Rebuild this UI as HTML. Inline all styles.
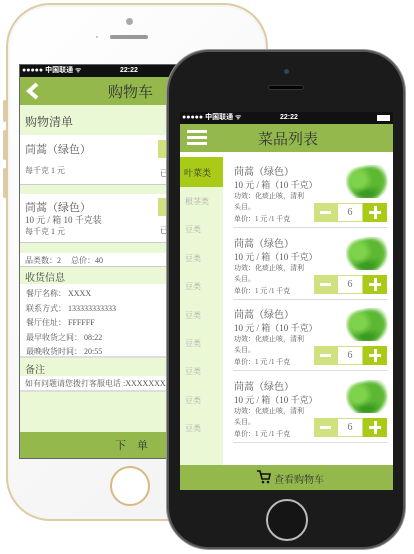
<!DOCTYPE html>
<html><head><meta charset="utf-8"><style>
*{margin:0;padding:0;box-sizing:border-box}
body{width:414px;height:554px;background:#fff;position:relative;overflow:hidden;font-family:"Liberation Serif","Noto Serif CJK SC",serif;color:#555}
.a{position:absolute}
.lt{position:absolute;white-space:nowrap}
.img{position:absolute;left:166px;top:8px;width:42px;height:33px;background:radial-gradient(circle at 30% 45%,#7fd24b 0 20%,transparent 40%),radial-gradient(circle at 65% 40%,#5cb833 0 22%,transparent 45%),radial-gradient(circle at 50% 70%,#3a9a22 0 25%,transparent 50%),radial-gradient(ellipse at 50% 55%,#6cc23e 0 55%,#fff 72%)}
</style></head><body>
<!-- white phone -->
<div class="a" style="left:6px;top:3px;width:262px;height:518px;border-radius:44px;background:linear-gradient(135deg,#fff,#f2f2f2);border:2px solid #dccba3;box-shadow:inset 0 0 0 2px #f5f5f5"></div>
<div class="a" style="left:3px;top:100px;width:4px;height:22px;background:#dccba3;border-radius:2px"></div>
<div class="a" style="left:3px;top:130px;width:4px;height:30px;background:#dccba3;border-radius:2px"></div>
<div class="a" style="left:3px;top:168px;width:4px;height:30px;background:#dccba3;border-radius:2px"></div>
<div class="a" style="left:126px;top:18px;width:7px;height:7px;border-radius:50%;background:#aaa"></div>
<div class="a" style="left:110px;top:35px;width:38px;height:4px;border-radius:2px;background:#999"></div>
<div class="a" style="left:96px;top:36px;width:2px;height:2px;border-radius:50%;background:#bbb"></div>
<div class="a" style="left:110px;top:466px;width:40px;height:40px;border-radius:50%;border:2px solid #d8b984;background:#fff"></div>
<!-- white phone screen -->
<div class="a" style="left:19px;top:64px;width:160px;height:395px;background:#ebf8d5;overflow:hidden;border:1px solid #666">
 <div class="a" style="left:0;top:0;width:160px;height:12px;background:#111;color:#fff;font:bold 7px 'Liberation Sans','Noto Sans CJK SC',sans-serif;line-height:12px;padding-left:2px">●●●●● 中国联通 ᯤ<span style="position:absolute;left:100px">22:22</span></div>
 <div class="a" style="left:0;top:12px;width:160px;height:28px;background:#94b84c"></div>
 <svg class="a" style="left:4px;top:17px" width="18" height="18" viewBox="0 0 18 18"><path d="M13 2 L5 9 L13 16" fill="none" stroke="#fff" stroke-width="4"/></svg>
 <div class="lt" style="left:88px;top:16px;font-size:15px;color:#333">购物车</div>
 <div class="lt" style="left:5px;top:48px;font-size:12px;color:#444">购物清单</div>
 <div class="a" style="left:0;top:70px;width:160px;height:50px;background:#fff;border-bottom:1px solid #ccc"></div>
 <div class="lt" style="left:5px;top:76px;font-size:11px">茼蒿（绿色）</div>
 <div class="lt" style="left:5px;top:100px;font-size:8px">每千克 1 元</div>
 <div class="a" style="left:138px;top:75px;width:22px;height:18px;background:#cfe27f"></div>
 <div class="lt" style="left:140px;top:103px;font-size:8px">已</div>
 <div class="a" style="left:0;top:129px;width:160px;height:49px;background:#fff;border-bottom:1px solid #ccc"></div>
 <div class="lt" style="left:5px;top:134px;font-size:11px">茼蒿（绿色）</div>
 <div class="lt" style="left:5px;top:148px;font-size:9px">10 元 / 箱 10 千克装</div>
 <div class="lt" style="left:5px;top:161px;font-size:8px">每千克 1 元</div>
 <div class="a" style="left:138px;top:133px;width:22px;height:18px;background:#cfe27f"></div>
 <div class="lt" style="left:140px;top:160px;font-size:8px">已</div>
 <div class="a" style="left:0;top:188px;width:160px;height:14px;background:#fff;border-bottom:1px solid #ccc"></div>
 <div class="lt" style="left:5px;top:190px;font-size:8px">品类数：2　 总价：40</div>
 <div class="lt" style="left:5px;top:204px;font-size:10px;color:#444">收货信息</div>
 <div class="a" style="left:0;top:219px;width:160px;height:74px;background:#fff;border-bottom:2px solid #ddd"></div>
 <div class="lt" style="left:6px;top:222px;font-size:8px;line-height:14.6px">餐厅名称：&nbsp;XXXX<br>联系方式：&nbsp;133333333333<br>餐厅住址：&nbsp;FFFFFF<br>最早收货之间：&nbsp;08:22<br>最晚收货时间：&nbsp;20:55</div>
 <div class="lt" style="left:5px;top:296px;font-size:10px;color:#444">备注</div>
 <div class="a" style="left:0;top:311px;width:160px;height:16px;background:#fff;border-bottom:2px solid #ddd"></div>
 <div class="lt" style="left:5px;top:313px;font-size:8px">如有问题请您拨打客服电话 :XXXXXXXXXX</div>
 <div class="a" style="left:0;top:367px;width:160px;height:28px;background:#94b84c"></div>
 <div class="lt" style="left:95px;top:372px;font-size:11px;color:#333">下　单</div>
</div>
<!-- black phone -->
<div class="a" style="left:167px;top:50px;width:238px;height:499px;border-radius:42px;background:#1b1b1b;border:2px solid #555;box-shadow:0 0 0 1px #999"></div>
<div class="a" style="left:284px;top:69px;width:5px;height:5px;border-radius:50%;background:#345"></div>
<div class="a" style="left:268px;top:85px;width:36px;height:5px;border-radius:3px;background:#050505;border:1px solid #333"></div>
<div class="a" style="left:266px;top:499px;width:42px;height:42px;border-radius:50%;border:2px solid #bbb;background:#151515"></div>
<!-- black phone screen -->
<div class="a" style="left:180px;top:112px;width:213px;height:378px;background:#fff;overflow:hidden">
 <div class="a" style="left:0;top:0;width:213px;height:12px;background:#111;color:#fff;font:bold 7px 'Liberation Sans','Noto Sans CJK SC',sans-serif;line-height:12px;padding-left:2px">●●●●● 中国联通 ᯤ<span style="position:absolute;left:100px">22:22</span><span style="position:absolute;right:3px;top:3px;width:13px;height:6px;background:#fff"></span></div>
 <div class="a" style="left:0;top:12px;width:213px;height:28px;background:#94b84c"></div>
 <div class="a" style="left:7px;top:18px;width:20px;height:3px;background:#fff"></div>
 <div class="a" style="left:7px;top:24px;width:20px;height:3px;background:#fff"></div>
 <div class="a" style="left:7px;top:30px;width:20px;height:3px;background:#fff"></div>
 <div class="lt" style="left:78px;top:16px;font-size:15px;color:#333">菜品列表</div>
 <div class="a" style="left:0;top:45px;width:43px;height:308px;background:#ebf8d5"></div>
 <div class="a" style="left:0;top:45px;width:43px;height:30px;background:#a9cb17"></div>
 <div class="lt" style="left:4px;top:54px;font-size:9px;color:#333">叶菜类</div>
 <div class="lt" style="left:5px;top:76px;font-size:8px;color:#aaa;line-height:28.4px">根茎类<br>豆类<br>豆类<br>豆类<br>豆类<br>豆类<br>豆类<br>豆类<br>豆类</div>
 <div class="a" style="left:0;top:353px;width:213px;height:25px;background:#94b84c"></div>
 <svg class="a" style="left:77px;top:358px" width="14" height="14" viewBox="0 0 14 14"><path d="M0 1 H3 L5 9 H12 L13 4 H4" fill="none" stroke="#111" stroke-width="1.6"/><circle cx="6" cy="12" r="1.3" fill="#111"/><circle cx="11" cy="12" r="1.3" fill="#111"/></svg>
 <div class="lt" style="left:94px;top:359px;font-size:10px;color:#333">查看购物车</div>
</div>
<div class="a" style="left:180px;top:157px;width:213px;height:72px">
  <div class="lt" style="left:54px;top:6px;font-size:10px">茼蒿（绿色）</div>
  <div class="lt" style="left:54px;top:21px;font-size:9px">10 元 / 箱（10 千克）</div>
  <div class="lt" style="left:54px;top:34px;font-size:7px">功效：化痰止咳，清利</div>
  <div class="lt" style="left:54px;top:45px;font-size:7px">头目。</div>
  <div class="lt" style="left:54px;top:57px;font-size:7px">单价：1 元 /1 千克</div>
  <div class="img"></div>
  <div class="a" style="left:134px;top:46px;width:23px;height:19px;background:#cfe27f"></div>
  <div class="a" style="left:140px;top:54px;width:11px;height:3px;background:#fff"></div>
  <div class="a" style="left:157px;top:46px;width:26px;height:19px;background:#fff;border:1px solid #cfe27f;text-align:center;font-size:10px;line-height:17px;color:#777">6</div>
  <div class="a" style="left:183px;top:46px;width:24px;height:19px;background:#a9cb17"></div>
  <div class="a" style="left:189px;top:54px;width:12px;height:3px;background:#fff"></div>
  <div class="a" style="left:194px;top:49px;width:3px;height:13px;background:#fff"></div>
  <div class="a" style="left:53px;top:70px;width:154px;height:1px;background:#ddd"></div>
</div>
<div class="a" style="left:180px;top:229px;width:213px;height:72px">
  <div class="lt" style="left:54px;top:6px;font-size:10px">茼蒿（绿色）</div>
  <div class="lt" style="left:54px;top:21px;font-size:9px">10 元 / 箱（10 千克）</div>
  <div class="lt" style="left:54px;top:34px;font-size:7px">功效：化痰止咳，清利</div>
  <div class="lt" style="left:54px;top:45px;font-size:7px">头目。</div>
  <div class="lt" style="left:54px;top:57px;font-size:7px">单价：1 元 /1 千克</div>
  <div class="img"></div>
  <div class="a" style="left:134px;top:46px;width:23px;height:19px;background:#cfe27f"></div>
  <div class="a" style="left:140px;top:54px;width:11px;height:3px;background:#fff"></div>
  <div class="a" style="left:157px;top:46px;width:26px;height:19px;background:#fff;border:1px solid #cfe27f;text-align:center;font-size:10px;line-height:17px;color:#777">6</div>
  <div class="a" style="left:183px;top:46px;width:24px;height:19px;background:#a9cb17"></div>
  <div class="a" style="left:189px;top:54px;width:12px;height:3px;background:#fff"></div>
  <div class="a" style="left:194px;top:49px;width:3px;height:13px;background:#fff"></div>
  <div class="a" style="left:53px;top:70px;width:154px;height:1px;background:#ddd"></div>
</div>
<div class="a" style="left:180px;top:300px;width:213px;height:72px">
  <div class="lt" style="left:54px;top:6px;font-size:10px">茼蒿（绿色）</div>
  <div class="lt" style="left:54px;top:21px;font-size:9px">10 元 / 箱（10 千克）</div>
  <div class="lt" style="left:54px;top:34px;font-size:7px">功效：化痰止咳，清利</div>
  <div class="lt" style="left:54px;top:45px;font-size:7px">头目。</div>
  <div class="lt" style="left:54px;top:57px;font-size:7px">单价：1 元 /1 千克</div>
  <div class="img"></div>
  <div class="a" style="left:134px;top:46px;width:23px;height:19px;background:#cfe27f"></div>
  <div class="a" style="left:140px;top:54px;width:11px;height:3px;background:#fff"></div>
  <div class="a" style="left:157px;top:46px;width:26px;height:19px;background:#fff;border:1px solid #cfe27f;text-align:center;font-size:10px;line-height:17px;color:#777">6</div>
  <div class="a" style="left:183px;top:46px;width:24px;height:19px;background:#a9cb17"></div>
  <div class="a" style="left:189px;top:54px;width:12px;height:3px;background:#fff"></div>
  <div class="a" style="left:194px;top:49px;width:3px;height:13px;background:#fff"></div>
  <div class="a" style="left:53px;top:70px;width:154px;height:1px;background:#ddd"></div>
</div>
<div class="a" style="left:180px;top:372px;width:213px;height:72px">
  <div class="lt" style="left:54px;top:6px;font-size:10px">茼蒿（绿色）</div>
  <div class="lt" style="left:54px;top:21px;font-size:9px">10 元 / 箱（10 千克）</div>
  <div class="lt" style="left:54px;top:34px;font-size:7px">功效：化痰止咳，清利</div>
  <div class="lt" style="left:54px;top:45px;font-size:7px">头目。</div>
  <div class="lt" style="left:54px;top:57px;font-size:7px">单价：1 元 /1 千克</div>
  <div class="img"></div>
  <div class="a" style="left:134px;top:46px;width:23px;height:19px;background:#cfe27f"></div>
  <div class="a" style="left:140px;top:54px;width:11px;height:3px;background:#fff"></div>
  <div class="a" style="left:157px;top:46px;width:26px;height:19px;background:#fff;border:1px solid #cfe27f;text-align:center;font-size:10px;line-height:17px;color:#777">6</div>
  <div class="a" style="left:183px;top:46px;width:24px;height:19px;background:#a9cb17"></div>
  <div class="a" style="left:189px;top:54px;width:12px;height:3px;background:#fff"></div>
  <div class="a" style="left:194px;top:49px;width:3px;height:13px;background:#fff"></div>
  <div class="a" style="left:53px;top:70px;width:154px;height:1px;background:#ddd"></div>
</div>
</body></html>
